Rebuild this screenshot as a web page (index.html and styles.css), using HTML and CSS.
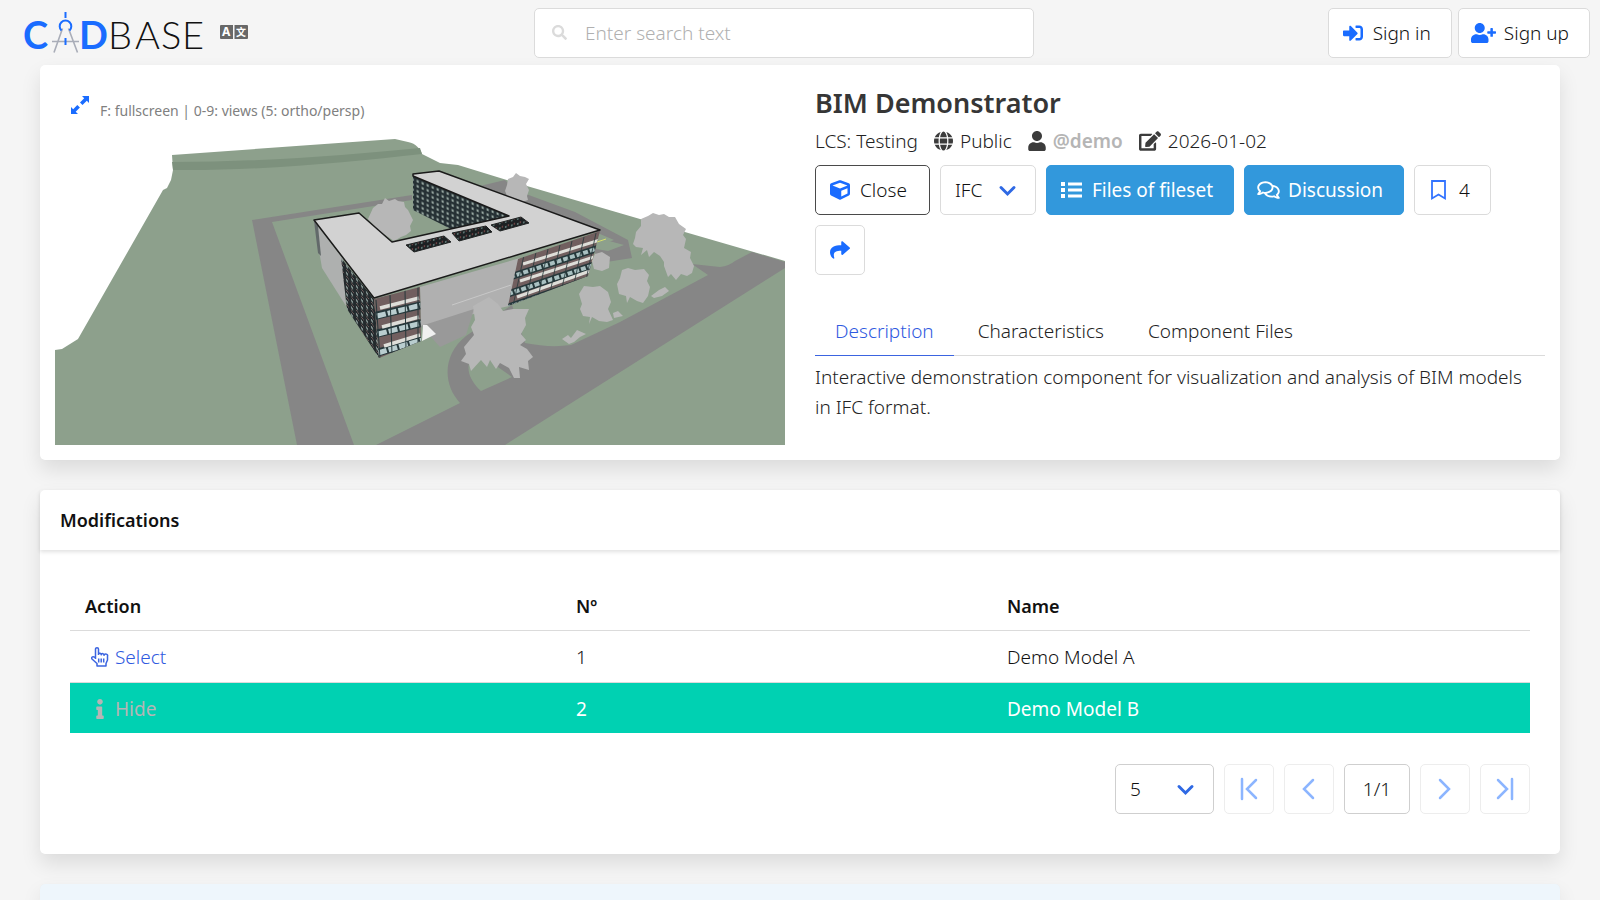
FILE: index.html
```html
<!DOCTYPE html>
<html lang="en">
<head>
<meta charset="utf-8">
<meta name="viewport" content="width=device-width, initial-scale=1">
<title>BIM Demonstrator - CADBase</title>
<link rel="stylesheet" href="styles.css">
</head>
<body>
<header class="navbar">
  <div class="brand">
    <a href="#" class="logo" aria-label="CADBase">
      <svg width="180" height="44" viewBox="24 9 180 44" aria-hidden="true">
        <g class="logo-strong"><text x="23" y="48">C</text><text x="79" y="48">D</text></g>
        <g class="logo-light"><text x="108" y="48">B</text><text x="135" y="48">A</text><text x="161" y="48">S</text><text x="182" y="48">E</text></g>
        <g fill="none" stroke="#a9adb8" stroke-width="1.6"><path d="M62.500 27.500 54 51.500M68.500 27.500 77.500 51.500M52 40.500H79"/></g>
        <g fill="none" stroke="#1a6cff" stroke-width="2"><path d="M61.500 29.500A5.800 5.800 0 1 1 69.500 29.500M65.500 11v6M65.500 37v7"/></g>
      </svg>
    </a>
    <button class="lang" aria-label="Language">
      <svg width="28" height="14" viewBox="0 0 28 14" aria-hidden="true"><path fill="#686868" d="M1 0h12v14H1a1 1 0 0 1-1-1V1a1 1 0 0 1 1-1zM14.500 0H27a1 1 0 0 1 1 1v12a1 1 0 0 1-1 1H14.500z"/><text class="lang-a" x="2" y="11">A</text><text class="lang-b" x="16" y="11">文</text></svg>
    </button>
  </div>
  <form class="search" role="search">
    <svg class="search-icon" width="15" height="15" viewBox="0 0 512 512" aria-hidden="true"><path d="M505 442.700L405.300 343c-4.500-4.500-10.600-7-17-7H372c27.600-35.300 44-79.700 44-128C416 93.100 322.900 0 208 0S0 93.100 0 208s93.100 208 208 208c48.300 0 92.700-16.400 128-44v16.300c0 6.400 2.500 12.500 7 17l99.700 99.700c9.400 9.400 24.600 9.400 33.900 0l28.300-28.300c9.400-9.400 9.400-24.600.1-34zM208 336c-70.700 0-128-57.200-128-128 0-70.700 57.200-128 128-128 70.700 0 128 57.200 128 128 0 70.700-57.200 128-128 128z"/></svg>
    <input type="search" placeholder="Enter search text" aria-label="Search">
  </form>
  <div class="account">
    <a href="#" class="button"><svg class="icon blue" width="20" height="20" viewBox="0 0 512 512" aria-hidden="true"><path d="M416 448h-84c-6.600 0-12-5.400-12-12v-40c0-6.600 5.400-12 12-12h84c17.700 0 32-14.300 32-32V160c0-17.700-14.300-32-32-32h-84c-6.600 0-12-5.400-12-12V76c0-6.600 5.400-12 12-12h84c53 0 96 43 96 96v192c0 53-43 96-96 96zm-47-201L201 79c-15-15-41-4.500-41 17v96H24c-13.300 0-24 10.700-24 24v96c0 13.300 10.700 24 24 24h136v96c0 21.500 26 32 41 17l168-168c9.300-9.400 9.300-24.600 0-34z"/></svg>Sign in</a>
    <a href="#" class="button tight"><svg class="icon blue" width="25" height="20" viewBox="0 0 640 512" aria-hidden="true"><path d="M624 208h-64v-64c0-8.800-7.200-16-16-16h-32c-8.800 0-16 7.200-16 16v64h-64c-8.800 0-16 7.200-16 16v32c0 8.800 7.200 16 16 16h64v64c0 8.800 7.200 16 16 16h32c8.800 0 16-7.200 16-16v-64h64c8.800 0 16-7.200 16-16v-32c0-8.800-7.200-16-16-16zM224 256c70.700 0 128-57.300 128-128S294.700 0 224 0 96 57.300 96 128s57.300 128 128 128zm89.600 32h-16.700c-22.200 10.200-46.900 16-72.900 16s-50.600-5.800-72.900-16h-16.700C60.200 288 0 348.200 0 422.400V464c0 26.500 21.500 48 48 48h352c26.500 0 48-21.500 48-48v-41.600c0-74.200-60.200-134.400-134.400-134.400z"/></svg>Sign up</a>
  </div>
</header>

<main class="page">
  <section class="card component">
    <div class="viewer">
      <div class="viewer-bar">
        <button class="expand" aria-label="Fullscreen"><svg width="18" height="18" viewBox="0 0 18 18" aria-hidden="true"><path fill="#1a6cff" d="M11 0h7v7l-2.200-2.200-4.300 4.200-2.500-2.500 4.200-4.300zM0 11l2.200 2.200 4.100-4.200 2.600 2.600-4.200 4.200L7 18H0z"/></svg></button>
        <span>F: fullscreen | 0-9: views (5: ortho/persp)</span>
      </div>
      <svg class="scene" viewBox="55 137 730 308" role="img" aria-label="3D model">
        <defs>
          <pattern id="court" width="5" height="5" patternUnits="userSpaceOnUse" patternTransform="skewY(22)"><path fill="#253034" d="M0 0h5v5H0z"/><path fill="#9aaaa4" d="M1.500 1.500h2.300v2.300H1.500z"/></pattern>
          <pattern id="side" width="5" height="7" patternUnits="userSpaceOnUse" patternTransform="skewY(53)"><path fill="#22292c" d="M0 0h5v7H0z"/><path fill="#83918f" d="M1 1h2v2.500H1z"/><path fill="#735d5d" d="M1 5h3v1H1z"/></pattern>
          <pattern id="sky" width="6" height="5" patternUnits="userSpaceOnUse" patternTransform="skewY(-14)"><path fill="#1c2022" d="M0 0h6v5H0z"/><path fill="#66817e" d="M1 2h1.500v2H1z"/><path fill="#8c5050" d="M4 1h1v2H4z"/></pattern>
          <clipPath id="clipR"><path d="M518 259 600 231 588 276 508 306z"/></clipPath>
          <clipPath id="clipL"><path d="M374 299 420 287 421 341 379 358z"/></clipPath>
        </defs>
        <path fill="#8da08c" d="M55 350 62 349 78 339 163 190 167 188 171 180 173 170 172 155 395 139 408 142C416 143 421 150 422 154L440 163 458 165 520 184 640 219 740 248 785 261V445H55z"/>
        <path fill="#7d917d" d="M172 162C260 162 350 155 420 148L422 154C350 162 260 171 173 170z"/>
        <g fill="#868686">
          <path d="M252 220 412 195V200L272 222 354 445H297z"/>
          <path d="M376 445 460 403C443 385 442 355 466 336L512 305 525 343Q550 348 571 345L620 322 708 275 692 264 720 267Q729 266 735 261L752 252 785 262V268L505 445z"/>
          <path d="M480 186 505 180 515 190 575 212 628 240 632 258 600 263 593 248 614 240 530 204z"/>
        </g>
        <path fill="#8da08c" d="M481 391C465 376 464 360 480 350L495 365 512 377z"/>
        <path fill="#8da08c" d="M598 238 624 245 608 251 596 249z"/>
        <path stroke="#d7df6a" fill="none" d="M597 242 606 239M589 262 594 260"/>
        <path fill="#b7b7b7" d="M373 208 378 204 382 204 385 198 389 201 395 199 398 201 404 202 405 207 408 210 410 214 413 220 410 226 411 231 406 235 401 237 394 241 378 230 368 219z"/>
        <path fill="#b7b7b7" d="M508 179 513 177 516 173 520 176 525 177 529 179 526 184 529 190 527 196 528 200 522 202 508 198 505 191 507 185z"/>
        <path fill="url(#court)" d="M413 176 511 216 453 230 413 210z"/>
        <path fill="#aeb0af" d="M314 221 343 259 346 306 322 268z"/>
        <path fill="#62696a" d="M314 221 318 226 321 256 318 253z"/>
        <path fill="#b0b0b0" d="M420 287 520 258 509 306 421 326z"/>
        <path fill="#999999" d="M421 326 474 309 466 335 440 347z"/>
        <path fill="url(#side)" d="M341 258 374 299 379 358 347 309z"/>
        <g clip-path="url(#clipL)">
          <path fill="#715f5f" d="M370 280h55v80h-55z"/>
          <g stroke="#26383b" stroke-width="8"><path d="M374 316 422 305M375 334 422 323M376 353 422 340"/></g>
          <g stroke="#b9cdcf" stroke-width="5" stroke-dasharray="9 2"><path d="M377 316 422 305M378 334 422 323M378 353 422 340"/></g>
          <g stroke="#deded9" stroke-width="3.500"><path d="M380 308 419 298M382 327 419 317M384 346 420 335"/></g>
          <path fill="none" stroke="#26383b" stroke-width="1" d="M418 285V345M376 300 380 358M390 295 392 354M405 290 406 350"/>
        </g>
        <g clip-path="url(#clipR)">
          <path fill="#715f5f" d="M500 225h105v90H500z"/>
          <g stroke="#26383b" stroke-width="7"><path d="M510 277 602 247M508 294 600 263M506 308 596 277"/></g>
          <g stroke="#a9c0c1" stroke-width="4" stroke-dasharray="5 2"><path d="M510 277 602 247M508 294 600 263M506 308 596 277"/></g>
          <g stroke="#deded9" stroke-width="3"><path d="M523 264 600 240M520 281 594 257M517 297 590 271"/></g>
          <path fill="none" stroke="#26383b" stroke-width=".8" d="M524 255 513 306M536 252 526 302M548 249 538 298M560 245 550 293M572 241 562 288M584 237 574 284M596 233 586 280"/>
        </g>
        <path fill="#d2d2d2" stroke="#1a1a1a" stroke-width="1.500" stroke-linejoin="round" d="M314 220 359 213 392 242 509 216 413 176V174L439 171 600 230 374 298z"/>
        <g fill="url(#sky)" stroke="#202424"><path d="M406 245 444 236 451 242 414 252zM452 233 486 226 492 232 459 241zM491 225 521 217 529 223 500 231z"/></g>
        <path fill="#f0f0f0" d="M423 325 427 325 436 334 422 341z"/>
        <path stroke="#c8c8c8" fill="none" d="M452 305 511 285"/>
        <g fill="#b7b7b7">
          <path d="M473 306 482 301 489 297 498 304 503 311 513 309 529 309 525 318 526 325 521 334 526 340 520 345 527 349 533 357 528 361 529 370 519 367 520 378 514 378 509 368 500 363 496 369 490 360 487 367 481 360 471 371 469 364 461 361 466 354 464 347 474 335 471 327 475 320z"/>
          <path d="M641 219 648 216 653 213 659 215 664 214 669 217 675 217 679 224 686 229 683 235 686 239 684 248 691 252 690 258 694 266 692 273 687 276 681 274 676 280 671 274 668 277 664 266 664 262 660 256 654 252 649 257 647 250 641 255 643 248 636 247 633 244 635 238 636 232 641 226z"/>
          <path d="M622 270 628 268 635 270 644 269 649 275 647 281 650 287 648 296 643 303 637 301 630 297 627 303 626 296 619 294 617 284 620 278z"/>
          <path d="M584 286 593 287 600 286 608 292 611 302 608 309 613 320 607 322 599 321 592 317 589 324 590 317 583 316 580 309 582 304 579 294z"/>
          <path d="M595 254 602 252 610 257 609 268 602 271 594 269 592 261z"/>
          <path d="M562 339 568 335 571 338 577 330 586 334 580 337 574 342 569 344zM651 296 659 290 665 287 669 291 662 296 654 298zM613 313 618 311 623 316 614 318z"/>
        </g>
      </svg>
    </div>

    <div class="info">
      <h1 class="title">BIM Demonstrator</h1>
      <div class="meta">
        <span>LCS: Testing</span>
        <span class="meta-item"><svg class="icon dark" width="19" height="20" viewBox="0 0 496 512" aria-hidden="true"><path d="M336.500 160C322 70.700 287.800 8 248 8s-74 62.700-88.500 152h177zM152 256c0 22.200 1.200 43.500 3.300 64h185.300c2.100-20.500 3.300-41.800 3.300-64s-1.200-43.500-3.300-64H155.300c-2.100 20.500-3.300 41.800-3.300 64zm324.700-96c-28.600-67.900-86.500-120.400-158-141.600 24.400 33.800 41.200 84.700 50 141.600h108zM177.200 18.400C105.800 39.600 47.800 92.100 19.300 160h108c8.700-56.900 25.500-107.800 49.900-141.600zM487.400 192H372.700c2.100 21 3.300 42.500 3.300 64s-1.200 43-3.300 64h114.600c5.500-20.500 8.600-41.800 8.600-64s-3.100-43.500-8.500-64zM120 256c0-21.500 1.200-43 3.300-64H8.600C3.200 212.500 0 233.800 0 256s3.200 43.500 8.600 64h114.600c-2-21-3.200-42.500-3.200-64zm39.500 96c14.500 89.300 48.700 152 88.500 152s74-62.700 88.500-152h-177zm159.300 141.600c71.400-21.200 129.400-73.700 158-141.600h-108c-8.800 56.900-25.600 107.800-50 141.600zM19.300 352c28.600 67.900 86.500 120.400 158 141.600-24.400-33.800-41.200-84.700-50-141.600h-108z"/></svg>Public</span>
        <span class="meta-item"><svg class="icon dark" width="18" height="20" viewBox="0 0 448 512" aria-hidden="true"><path d="M224 256c70.700 0 128-57.300 128-128S294.700 0 224 0 96 57.300 96 128s57.300 128 128 128zm89.600 32h-16.700c-22.200 10.200-46.900 16-72.900 16s-50.600-5.800-72.900-16h-16.700C60.200 288 0 348.200 0 422.400V464c0 26.500 21.500 48 48 48h352c26.500 0 48-21.500 48-48v-41.600c0-74.200-60.200-134.400-134.400-134.400z"/></svg><a href="#" class="author">@demo</a></span>
        <span class="meta-item"><svg class="icon dark" width="22" height="20" viewBox="0 0 576 512" aria-hidden="true"><path d="M402.600 83.200l90.200 90.200c3.800 3.800 3.800 10 0 13.800L274.400 405.600l-92.800 10.300c-12.400 1.400-22.900-9.100-21.500-21.500l10.300-92.800L388.800 83.200c3.800-3.800 10-3.800 13.800 0zm162-22.900l-48.800-48.800c-15.200-15.200-39.900-15.200-55.200 0l-35.400 35.400c-3.800 3.800-3.800 10 0 13.800l90.200 90.200c3.800 3.800 10 3.800 13.800 0l35.400-35.400c15.200-15.300 15.200-40 0-55.200zM384 346.200V448H64V128h229.800c3.200 0 6.200-1.300 8.500-3.500l40-40c7.600-7.600 2.200-20.500-8.500-20.500H48C21.500 64 0 85.500 0 112v352c0 26.500 21.500 48 48 48h352c26.500 0 48-21.500 48-48V306.200c0-10.700-12.900-16-20.500-8.500l-40 40c-2.200 2.300-3.500 5.300-3.500 8.500z"/></svg>2026-01-02</span>
      </div>
      <div class="actions">
        <button class="button active"><svg class="icon blue" width="20" height="20" viewBox="0 0 512 512" aria-hidden="true"><path d="M239.100 6.300l-208 78c-18.700 7-31.100 25-31.100 45v225.100c0 18.200 10.300 34.800 26.500 42.900l208 104c13.500 6.800 29.400 6.800 42.900 0l208-104c16.300-8.100 26.500-24.800 26.500-42.900V129.300c0-20-12.400-37.900-31.100-44.900l-208-78C262 2.200 250 2.200 239.100 6.300zM256 68.400l192 72v1.100l-192 78-192-78v-1.100l192-72zm32 356V275.500l160-65v133.900l-160 80z"/></svg>Close</button>
        <div class="select">
          <select class="format" aria-label="File format"><option>IFC</option></select>
          <svg class="chevron" width="17" height="17" viewBox="0 0 17 17" aria-hidden="true"><path d="M2 5.500 8.500 12 15 5.500"/></svg>
        </div>
        <button class="button info-button"><svg class="icon" width="21" height="20" viewBox="0 0 21 20" aria-hidden="true"><path d="M0 2h4v4H0zM0 8h4v4H0zM0 14h4v4H0zM7 2.500h14v3H7zM7 8.500h14v3H7zM7 14.500h14v3H7z"/></svg>Files of fileset</button>
        <button class="button info-button talk"><svg class="icon" width="23" height="20" viewBox="0 0 576 512" aria-hidden="true"><path d="M532 386.200c27.500-27.100 44-61.100 44-98.200 0-80-76.500-146.100-176.200-157.900C368.300 72.500 294.300 32 208 32 93.100 32 0 103.600 0 192c0 37 16.500 71 44 98.200-15.300 30.700-37.300 54.500-37.700 54.900-6.300 6.700-8.100 16.500-4.400 25 3.600 8.500 12 14 21.200 14 53.500 0 96.700-20.200 125.200-38.800 9.200 2.100 18.700 3.700 28.400 4.900C208.100 407.600 281.800 448 368 448c20.800 0 40.800-2.400 59.800-6.800C456.300 459.700 499.400 480 553 480c9.200 0 17.500-5.500 21.200-14 3.600-8.500 1.900-18.300-4.400-25-.4-.3-22.500-24.100-37.800-54.800zm-392.800-92.300L122.100 305c-14.100 9.100-28.500 16.300-43.100 21.400 2.700-4.700 5.400-9.700 8-14.800l15.500-31.100L77.700 256C64.200 242.600 48 220.700 48 192c0-60.700 73.300-112 160-112s160 51.300 160 112-73.300 112-160 112c-16.500 0-33-1.900-49-5.600l-19.800-4.500zM498.300 352l-24.700 24.400 15.500 31.100c2.600 5.100 5.300 10.100 8 14.800-14.600-5.100-29-12.300-43.100-21.400l-17.100-11.100-19.900 4.600c-16 3.700-32.500 5.600-49 5.600-54 0-102.200-20.100-131.300-49.700C338 339.500 416 272.900 416 192c0-3.400-.4-6.700-.7-10C479.700 196.500 528 238.800 528 288c0 28.700-16.200 50.600-29.700 64z"/></svg>Discussion</button>
        <button class="button bookmark"><svg class="icon blue" width="15" height="20" viewBox="0 0 15 20" aria-hidden="true"><path fill="none" stroke="#3273ff" stroke-width="1.800" d="M1 1h13v17.500L7.500 14.500 1 18.500z"/></svg>4</button>
        <button class="button square" aria-label="Share"><svg class="icon blue" width="20" height="20" viewBox="0 0 512 512" aria-hidden="true"><path d="M503.700 189.800L327.700 37.900C312.300 24.500 288 35.300 288 56v80.100C127.400 137.900 0 170.100 0 322.300c0 61.400 39.600 122.300 83.300 154.100 13.700 9.900 33.100-2.500 28.100-18.600C66.100 312.800 132.900 274.300 288 272.100V360c0 20.700 24.300 31.500 39.700 18.200l176-152c11.100-9.600 11.100-26.800 0-36.400z"/></svg></button>
      </div>
      <nav class="tabs">
        <a href="#" class="tab current">Description</a>
        <a href="#" class="tab">Characteristics</a>
        <a href="#" class="tab">Component Files</a>
      </nav>
      <p class="description">Interactive demonstration component for visualization and analysis of BIM models in IFC format.</p>
    </div>
  </section>

  <section class="card">
    <h2 class="card-header">Modifications</h2>
    <div class="card-body">
      <table class="table">
        <colgroup><col class="col-action"><col class="col-number"><col></colgroup>
        <thead><tr><th>Action</th><th>Nº</th><th>Name</th></tr></thead>
        <tbody>
          <tr><td><a href="#" class="row-action"><svg class="icon" width="20" height="20" viewBox="0 0 20 20" aria-hidden="true"><path fill="none" stroke="#3b64e0" stroke-width="1.500" stroke-linejoin="round" d="M5.500 12V2.200a1.400 1.400 0 0 1 3 0V8M8.500 7.200a1.400 1.400 0 0 1 2.700.6 1.400 1.400 0 0 1 2.800.5 1.500 1.500 0 0 1 3.500 1.200V13L16 16.500V19H7v-2.500L2 12C.8 10.200 3.300 8.500 5.500 11M8.700 11.500v4M11.200 11.500v4M13.700 11.500v4"/></svg>Select</a></td><td>1</td><td>Demo Model A</td></tr>
          <tr class="selected"><td><a href="#" class="row-action"><svg class="icon" width="20" height="20" viewBox="-160 0 512 512" aria-hidden="true"><path d="M20 424.200h20V279.800H20c-11 0-20-9-20-20V212c0-11 9-20 20-20h112c11 0 20 9 20 20v212.200h20c11 0 20 9 20 20V492c0 11-9 20-20 20H20c-11 0-20-9-20-20v-47.800c0-11 9-20 20-20zM96 0C56.200 0 24 32.200 24 72s32.200 72 72 72 72-32.200 72-72S135.800 0 96 0z"/></svg>Hide</a></td><td>2</td><td>Demo Model B</td></tr>
        </tbody>
      </table>
      <div class="pagination">
        <div class="select">
          <select class="per-page" aria-label="Rows per page"><option>5</option></select>
          <svg class="chevron" width="17" height="17" viewBox="0 0 17 17" aria-hidden="true"><path d="M2 5.500 8.500 12 15 5.500"/></svg>
        </div>
        <button class="button square" disabled aria-label="First page"><svg width="20" height="22" viewBox="0 0 20 22" aria-hidden="true"><path d="M3 1v20M17 2 8 11l9 9"/></svg></button>
        <button class="button square" disabled aria-label="Previous page"><svg width="20" height="22" viewBox="0 0 20 22" aria-hidden="true"><path d="M14 2 5 11l9 9"/></svg></button>
        <button class="button page-count">1/1</button>
        <button class="button square" disabled aria-label="Next page"><svg width="20" height="22" viewBox="0 0 20 22" aria-hidden="true"><path d="M5 2 14 11l-9 9"/></svg></button>
        <button class="button square" disabled aria-label="Last page"><svg width="20" height="22" viewBox="0 0 20 22" aria-hidden="true"><path d="M3 2 12 11l-9 9M17 1v20"/></svg></button>
      </div>
    </div>
  </section>

  <section class="card notice"></section>
</main>
</body>
</html>
```
FILE: styles.css
```css
* { box-sizing: border-box; }

body {
  margin: 0;
  display: flex;
  flex-direction: column;
  min-height: 100vh;
  background: #f5f5f5;
  color: #222;
  font: 300 19px/30px "Noto Sans", sans-serif;
}

button, input, select { font: inherit; color: inherit; }
a { color: inherit; text-decoration: none; }
svg { display: block; flex: none; overflow: visible; }

.navbar {
  display: grid;
  grid-template-columns: minmax(0, 510fr) minmax(0, 500fr) minmax(0, 556fr);
  align-items: center;
  height: 65px;
  padding: 0 10px 0 24px;
}

.brand { display: flex; align-items: center; gap: 16px; margin-top: -2px; }
.logo-strong { font: 700 38px Lato, sans-serif; fill: #1a6cff; }
.logo-light { font: 300 38px Lato, sans-serif; fill: #111; }
.lang { border: 0; background: none; padding: 0; }
.lang-a { font: 700 12px "Noto Sans", sans-serif; fill: #fff; }
.lang-b { font: 700 10px "Noto Sans CJK SC", sans-serif; fill: #fff; }

.search { position: relative; }
.search input {
  display: block;
  width: 100%;
  height: 50px;
  padding: 0 15px 0 50px;
  border: 1px solid #dbdbdb;
  border-radius: 5px;
  background: #fff;
  outline: 0;
}
.search input::placeholder { color: #b0b0b0; opacity: 1; }
.search-icon { position: absolute; left: 18px; top: 17px; fill: #dbdbdb; }

.account { display: flex; justify-content: flex-end; gap: 6px; }

.button {
  display: inline-flex;
  align-items: center;
  gap: 10px;
  height: 50px;
  padding: 0 20px 0 14px;
  border: 1px solid #dbdbdb;
  border-radius: 5px;
  background: #fff;
  color: #111;
  white-space: nowrap;
}
.tight { padding-left: 12px; gap: 8px; }
.active { padding-right: 22px; border-color: #4a4a4a; }
.icon { fill: currentColor; }
.blue { fill: #1a6cff; }
.dark { fill: #3c3c3c; }
.info-button { border-color: #3298dc; background: #3298dc; color: #fff; font-weight: 400; }
.talk { gap: 8px; padding-left: 12px; }
.bookmark { padding-left: 16px; gap: 13px; }
.square { width: 50px; padding: 0; justify-content: center; }

.page { display: flex; flex: 1; flex-direction: column; padding: 0 40px; }

.card {
  margin-bottom: 30px;
  border-radius: 5px;
  background: #fff;
  box-shadow: 0 10px 20px rgba(10, 10, 10, .1), 0 0 1px rgba(10, 10, 10, .04);
}

.component {
  display: grid;
  grid-template-columns: 1fr 1fr;
  gap: 30px;
  padding: 15px;
}

.viewer-bar {
  display: flex;
  align-items: center;
  gap: 11px;
  height: 57px;
  padding-left: 16px;
  color: #808080;
  font-size: 14px;
  font-weight: 400;
}
.viewer-bar span { padding-top: 4px; }
.expand { margin-bottom: 8px; padding: 0; border: 0; background: none; }
.scene { width: 100%; height: auto; }

.title { margin: 0; color: #363636; font-size: 27px; line-height: 46px; font-weight: 600; }
.meta { display: flex; gap: 16px; }
.meta-item { display: flex; align-items: center; gap: 7px; }
.author { color: #b5b5b5; font-weight: 600; }
.actions { display: flex; flex-wrap: wrap; gap: 10px; margin-top: 9px; }

.select { position: relative; }
.select select {
  display: block;
  height: 50px;
  padding: 0 14px;
  border: 1px solid #dbdbdb;
  border-radius: 5px;
  background: #fff;
  color: #111;
  appearance: none;
}
.format { width: 96px; }
.select .per-page { width: 99px; border-color: #cfcfcf; }
.chevron {
  position: absolute;
  right: 20px;
  top: 17px;
  fill: none;
  stroke: #2f69e4;
  stroke-width: 3;
  stroke-linecap: round;
  pointer-events: none;
}

.tabs { display: flex; gap: 4px; margin-top: 31px; border-bottom: 1px solid #dbdbdb; }
.tab { padding: 10px 20px 9px; margin-bottom: -1px; border-bottom: 1px solid transparent; }
.current { color: #2f5ae0; border-color: #3b64e0; }
.description { margin: 6px 0 0; padding-right: 10px; }

.card-header {
  margin: 0;
  padding: 15px 20px;
  color: #111;
  font-size: 18px;
  font-weight: 600;
  box-shadow: 0 2px 4px rgba(10, 10, 10, .12);
}
.card-body { padding: 30px 30px 40px; color: #111; }

.table { width: 100%; border-collapse: collapse; table-layout: fixed; }
.col-action { width: 33.630%; }
.col-number { width: 29.520%; }
.table th, .table td { padding: 11px 15px 10px; text-align: left; border-bottom: 1px solid #dbdbdb; }
.table th { padding-bottom: 9px; font-size: 18px; font-weight: 600; }
.row-action { display: flex; align-items: center; gap: 5px; width: fit-content; margin-left: 5px; color: #2f5ae0; }
.table .selected td { padding-bottom: 9px; border-bottom: 0; background: #00d1b2; color: #fff; font-weight: 400; }
.table .selected .row-action { color: #b5b5b5; }

.pagination { display: flex; justify-content: flex-end; gap: 10px; margin-top: 31px; }
.page-count { width: 66px; padding: 0; justify-content: center; border-color: #cfcfcf; }
.square:disabled { border-color: #ededed; }
.square:disabled svg { fill: none; stroke: #8cb5ff; stroke-width: 2.500; stroke-linecap: round; }

.notice { flex: 1; margin-bottom: 0; border-radius: 5px 5px 0 0; background: #eef6fc; }
```
